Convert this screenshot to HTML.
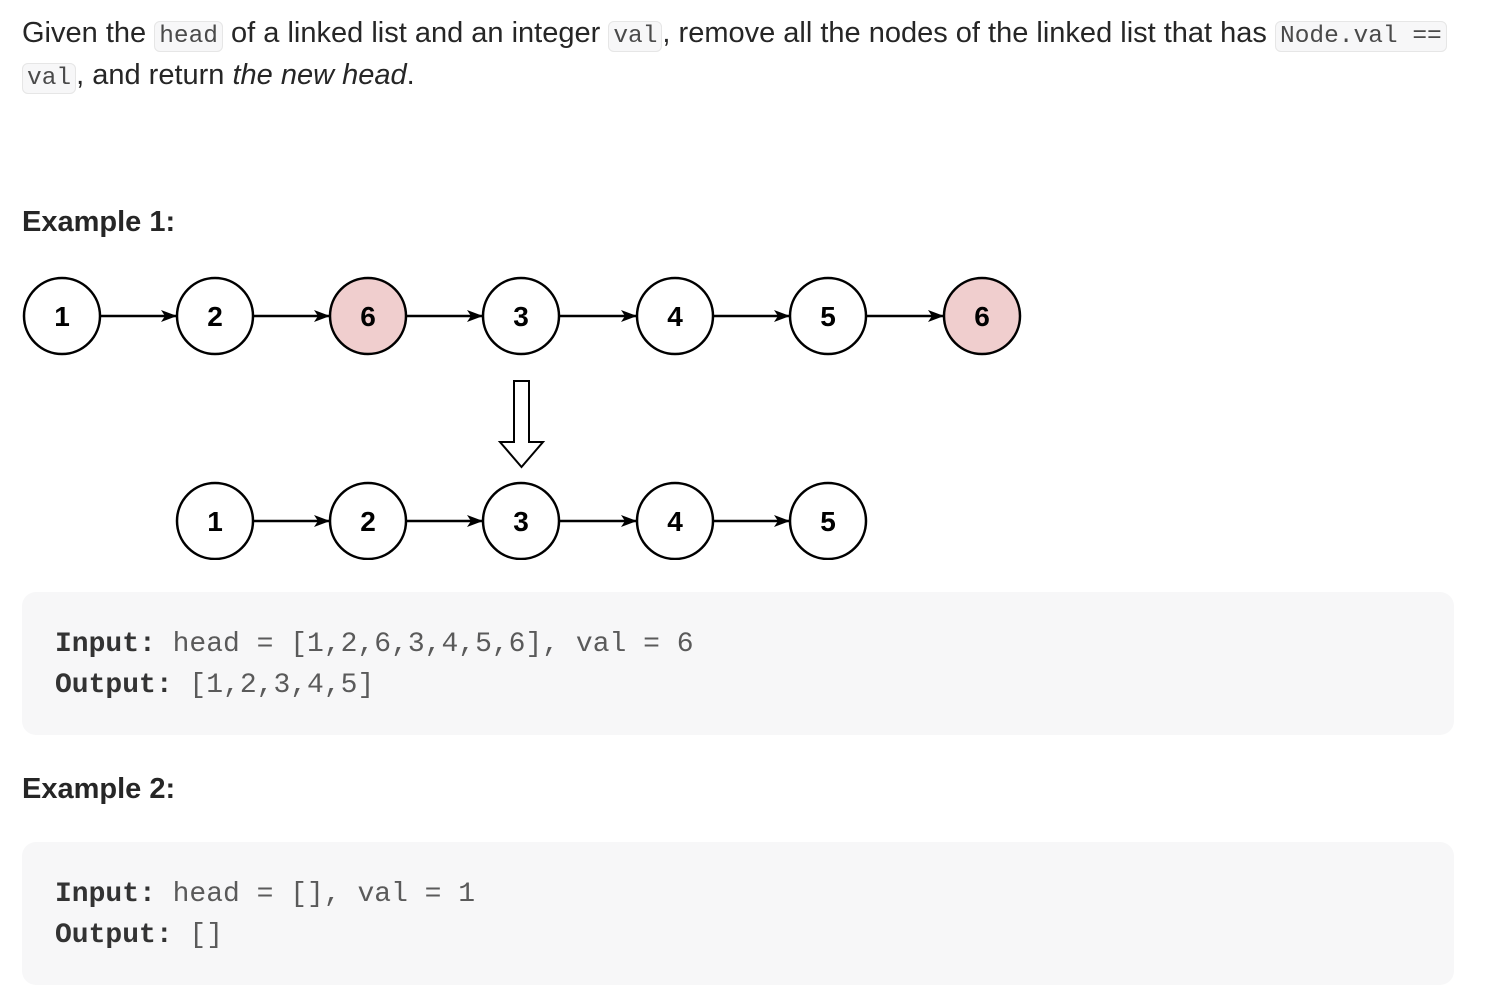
<!DOCTYPE html>
<html><head><meta charset="utf-8"><style>
body{margin:0;background:#fff;width:1486px;height:994px;overflow:hidden;position:relative;font-family:"Liberation Sans",sans-serif;color:#262626}
.p{position:absolute;left:22px;font-size:29px;white-space:nowrap;line-height:42px}
code{font-family:"Liberation Mono",monospace;font-size:24.5px;color:#4a4a4a;background:#f7f7f8;border:1px solid #e6e6e6;border-radius:6px;padding:1px 4px}
h3{position:absolute;left:22px;margin:0;font-size:29px;font-weight:bold;color:#262626}
.pre{position:absolute;left:22px;width:1432px;background:#f7f7f8;border-radius:14px;font-family:"Liberation Mono",monospace;font-size:28px;line-height:41px;color:#5a5a5a;box-sizing:border-box;padding:32px 33px;white-space:pre}
.pre b{color:#333}
</style></head><body>
<div class="p" style="top:12px">Given the <code>head</code> of a linked list and an integer <code>val</code>, remove all the nodes of the linked list that has <code>Node.val ==</code></div>
<div class="p" style="top:54px"><code>val</code>, and return <i>the new head</i>.</div>
<h3 style="top:206px">Example 1:</h3>
<svg style="position:absolute;left:0;top:0" width="1486" height="560">
<defs><marker id="a" markerWidth="16" markerHeight="12" refX="15" refY="6" orient="auto" markerUnits="userSpaceOnUse"><path d="M0,0 L16,6 L0,12 L4,6 Z" fill="#000"/></marker></defs>
<g stroke="#000" stroke-width="2.5" fill="#fff">
<line x1="100" y1="316" x2="176" y2="316" marker-end="url(#a)"/>
<line x1="253" y1="316" x2="329" y2="316" marker-end="url(#a)"/>
<line x1="406" y1="316" x2="482" y2="316" marker-end="url(#a)"/>
<line x1="559" y1="316" x2="636" y2="316" marker-end="url(#a)"/>
<line x1="713" y1="316" x2="789" y2="316" marker-end="url(#a)"/>
<line x1="866" y1="316" x2="943" y2="316" marker-end="url(#a)"/>
<circle cx="62" cy="316" r="38"/><circle cx="215" cy="316" r="38"/><circle cx="368" cy="316" r="38" fill="#f0cece"/><circle cx="521" cy="316" r="38"/><circle cx="675" cy="316" r="38"/><circle cx="828" cy="316" r="38"/><circle cx="982" cy="316" r="38" fill="#f0cece"/>
<line x1="253" y1="521" x2="329" y2="521" marker-end="url(#a)"/>
<line x1="406" y1="521" x2="482" y2="521" marker-end="url(#a)"/>
<line x1="559" y1="521" x2="636" y2="521" marker-end="url(#a)"/>
<line x1="713" y1="521" x2="789" y2="521" marker-end="url(#a)"/>
<circle cx="215" cy="521" r="38"/><circle cx="368" cy="521" r="38"/><circle cx="521" cy="521" r="38"/><circle cx="675" cy="521" r="38"/><circle cx="828" cy="521" r="38"/>
<path d="M514,381 H529 V442 H543 L521.5,467 L500,442 H514 Z" stroke-width="2"/>
</g>
<g font-family="Liberation Sans,sans-serif" font-weight="bold" font-size="28" text-anchor="middle" fill="#000">
<text x="62" y="326">1</text><text x="215" y="326">2</text><text x="368" y="326">6</text><text x="521" y="326">3</text><text x="675" y="326">4</text><text x="828" y="326">5</text><text x="982" y="326">6</text>
<text x="215" y="531">1</text><text x="368" y="531">2</text><text x="521" y="531">3</text><text x="675" y="531">4</text><text x="828" y="531">5</text>
</g>
</svg>
<div class="pre" style="top:592px;height:143px"><b>Input:</b> head = [1,2,6,3,4,5,6], val = 6
<b>Output:</b> [1,2,3,4,5]</div>
<h3 style="top:773px">Example 2:</h3>
<div class="pre" style="top:842px;height:143px"><b>Input:</b> head = [], val = 1
<b>Output:</b> []</div>
</body></html>
